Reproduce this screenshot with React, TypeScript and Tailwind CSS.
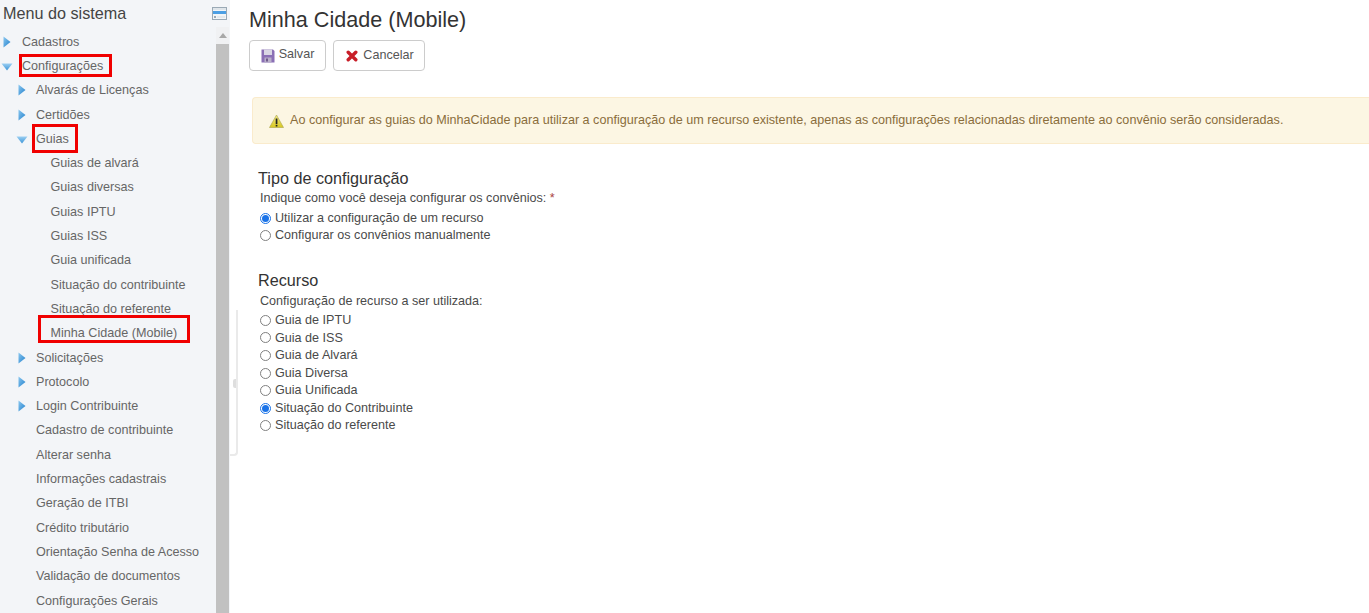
const font = "font-['Liberation_Sans',Arial,sans-serif]";

function Right() {
  return (
    <svg width="8" height="12" viewBox="0 0 8 12" className="block">
      <defs>
        <linearGradient id="gr" x1="0" y1="0" x2="1" y2="1">
          <stop offset="0" stopColor="#8cc8f0" />
          <stop offset="1" stopColor="#1f7fcc" />
        </linearGradient>
      </defs>
      <path d="M0.5 0.5 L7.5 6 L0.5 11.5 Z" fill="url(#gr)" />
    </svg>
  );
}

function Down() {
  return (
    <svg width="12" height="8" viewBox="0 0 12 8" className="block">
      <defs>
        <linearGradient id="gd" x1="0" y1="0" x2="0" y2="1">
          <stop offset="0" stopColor="#9ccff2" />
          <stop offset="1" stopColor="#3a94d8" />
        </linearGradient>
      </defs>
      <path d="M0.5 0.5 L11.5 0.5 L6 7.5 Z" fill="url(#gd)" />
    </svg>
  );
}

type Item = { t: string; lvl: number; icon?: "r" | "d"; box?: string };

const items: Item[] = [
  { t: "Cadastros", lvl: 0, icon: "r" },
  { t: "Configurações", lvl: 0, icon: "d", box: "left-[19px] w-[93px] top-0 h-[23px]" },
  { t: "Alvarás de Licenças", lvl: 1, icon: "r" },
  { t: "Certidões", lvl: 1, icon: "r" },
  { t: "Guias", lvl: 1, icon: "d", box: "left-[32px] w-[46px] top-[-3px] h-[29px]" },
  { t: "Guias de alvará", lvl: 2 },
  { t: "Guias diversas", lvl: 2 },
  { t: "Guias IPTU", lvl: 2 },
  { t: "Guias ISS", lvl: 2 },
  { t: "Guia unificada", lvl: 2 },
  { t: "Situação do contribuinte", lvl: 2 },
  { t: "Situação do referente", lvl: 2 },
  { t: "Minha Cidade (Mobile)", lvl: 2, box: "left-[38px] w-[152px] top-[-6px] h-[28px]" },
  { t: "Solicitações", lvl: 1, icon: "r" },
  { t: "Protocolo", lvl: 1, icon: "r" },
  { t: "Login Contribuinte", lvl: 1, icon: "r" },
  { t: "Cadastro de contribuinte", lvl: 1 },
  { t: "Alterar senha", lvl: 1 },
  { t: "Informações cadastrais", lvl: 1 },
  { t: "Geração de ITBI", lvl: 1 },
  { t: "Crédito tributário", lvl: 1 },
  { t: "Orientação Senha de Acesso", lvl: 1 },
  { t: "Validação de documentos", lvl: 1 },
  { t: "Configurações Gerais", lvl: 1 },
];

const pad = ["pl-[22px]", "pl-[36px]", "pl-[50.5px]"];
const iconPos = ["left-[3px]", "left-[17.5px]", "left-[32px]"];
const iconPosDown = ["left-[1px]", "left-[15.5px]", "left-[30px]"];

function Row({ it }: { it: Item }) {
  return (
    <div className={`relative h-[24.3px] leading-[24.3px] text-[12.6px] text-[#666] whitespace-nowrap ${pad[it.lvl]}`}>
      {it.icon === "r" && (
        <span className={`absolute top-[6px] ${iconPos[it.lvl]}`}>
          <Right />
        </span>
      )}
      {it.icon === "d" && (
        <span className={`absolute top-[9px] ${iconPosDown[it.lvl]}`}>
          <Down />
        </span>
      )}
      {it.t}
      {it.box && <span className={`absolute border-[3px] border-[#f00000] ${it.box}`} />}
    </div>
  );
}

function Radio({ label, on }: { label: string; on?: boolean }) {
  return (
    <div className="flex items-center h-[17.6px] text-[12.6px] text-[#4a4a4a]">
      <span
        className={`w-[11px] h-[11px] rounded-full border bg-white mr-[4px] ml-[2px] flex items-center justify-center ${
          on ? "border-[#1a73e8]" : "border-[#808080]"
        }`}
      >
        {on && <span className="w-[7px] h-[7px] rounded-full bg-[#1a73e8]" />}
      </span>
      {label}
    </div>
  );
}

function Panel() {
  return (
    <svg width="15" height="13" viewBox="0 0 15 13" className="block">
      <rect x="0.5" y="0.5" width="14" height="12" fill="#f2f5f7" stroke="#9aa9b5" />
      <rect x="1" y="1" width="13" height="2" fill="#dfe5ea" />
      <rect x="1" y="4" width="13" height="3" fill="#4c9fe4" />
      <rect x="2" y="9" width="2" height="2" fill="#9aa9b5" />
      <rect x="5" y="9.5" width="8" height="1" fill="#d5dde3" />
    </svg>
  );
}

export default function App() {
  return (
    <div className={`${font} flex h-[613px] w-[1369px] overflow-hidden bg-white`}>
      <aside className="w-[230px] shrink-0 bg-[#f3f5f8] flex flex-col">
        <div className="h-[27px] flex items-center justify-between pl-[3px] pr-[3px] shrink-0">
          <span className="text-[16.2px] text-[#444]">Menu do sistema</span>
          <Panel />
        </div>
        <div className="flex flex-1 min-h-0">
          <nav className="flex-1 min-w-0 overflow-hidden pt-[2.7px]">
            {items.map((it) => (
              <Row key={it.t} it={it} />
            ))}
          </nav>
          <div className="w-[13px] flex flex-col mr-[1px]">
            <div className="h-[17px] flex items-center justify-center bg-[#f0f1f3]">
              <svg width="8" height="5" viewBox="0 0 8 5">
                <path d="M0 5 L4 0 L8 5 Z" fill="#a8a8a8" />
              </svg>
            </div>
            <div className="flex-1 bg-[#c1c1c1]" />
          </div>
        </div>
      </aside>
      <div className="relative w-[8px] shrink-0">
        <div className="absolute left-0 top-[310px] h-[146px] w-[8px] rounded-br-[4px] border-r-2 border-b-2 border-[#eaeaea] bg-white" />
        <div className="absolute left-[3px] top-[379px] h-[9px] w-[3px] rounded-l-[2px] bg-[#dedede]" />
      </div>
      <main className="flex-1 min-w-0 pl-[11px]">
        <h1 className="text-[21.6px] leading-[24px] text-[#333] mt-[8px]">Minha Cidade (Mobile)</h1>
        <div className="flex gap-[7px] mt-[8px]">
          <button className="h-[31px] w-[77px] flex items-center justify-center gap-[4px] border border-[#ccc] rounded-[4px] bg-white text-[12.6px] text-[#555]">
            <svg width="14" height="14" viewBox="0 0 14 14" className="block">
              <path d="M0.5 0.5 H12 L13.5 2 V13.5 H0.5 Z" fill="#8a6fb5" />
              <rect x="3" y="0.5" width="8" height="5.5" fill="#d9d6e4" />
              <rect x="3.5" y="8.5" width="7" height="5" fill="#b9b0c9" />
              <rect x="5" y="9.5" width="2" height="3" fill="#6f5a8c" />
            </svg>
            <span className="pb-[2px]">Salvar</span>
          </button>
          <button className="h-[31px] w-[92px] flex items-center justify-center gap-[5px] border border-[#ccc] rounded-[4px] bg-white pl-[2px] text-[12.6px] text-[#555]">
            <svg width="12" height="12" viewBox="0 0 12 12" className="block">
              <path d="M2.2 2.2 L9.8 9.8 M9.8 2.2 L2.2 9.8" stroke="#c81e28" strokeWidth="3.4" strokeLinecap="round" />
            </svg>
            <span className="pb-[1px]">Cancelar</span>
          </button>
        </div>
        <div className="mt-[26px] ml-[3px] h-[47px] flex items-center border border-r-0 border-[#faebcc] rounded-l-[4px] bg-[#fcf6e3] pl-[16px] text-[12.6px] text-[#8a6d3b] whitespace-nowrap">
          <svg width="15" height="14" viewBox="0 0 15 14" className="block mr-[6px] shrink-0">
            <defs>
              <linearGradient id="w" x1="0" y1="0" x2="0" y2="1">
                <stop offset="0" stopColor="#f2ea8a" />
                <stop offset="1" stopColor="#d8c820" />
              </linearGradient>
            </defs>
            <path d="M7.5 1 L14.5 13.5 H0.5 Z" fill="url(#w)" stroke="#a8a24a" strokeWidth="0.6" />
            <rect x="6.7" y="4.5" width="1.7" height="5.5" fill="#222" />
            <rect x="6.7" y="10.8" width="1.7" height="1.7" fill="#222" />
          </svg>
          <span>
            Ao configurar as guias do MinhaCidade para utilizar a configuração de um recurso existente, apenas as configurações relacionadas diretamente ao convênio serão consideradas.
          </span>
        </div>
        <section className="ml-[9px] mt-[25px]">
          <h2 className="text-[16.2px] leading-[18px] text-[#333]">Tipo de configuração</h2>
          <div className="ml-[2px] mt-[4px] text-[12.6px] leading-[15px] text-[#4a4a4a]">
            Indique como você deseja configurar os convênios: <span className="text-[#a94442]">*</span>
          </div>
          <div className="mt-[3.4px]">
            <Radio label="Utilizar a configuração de um recurso" on />
            <Radio label="Configurar os convênios manualmente" />
          </div>
          <h2 className="text-[16.2px] leading-[18px] text-[#333] mt-[26.6px]">Recurso</h2>
          <div className="ml-[2px] mt-[5px] text-[12.6px] leading-[15px] text-[#4a4a4a]">Configuração de recurso a ser utilizada:</div>
          <div className="mt-[2.4px]">
            <Radio label="Guia de IPTU" />
            <Radio label="Guia de ISS" />
            <Radio label="Guia de Alvará" />
            <Radio label="Guia Diversa" />
            <Radio label="Guia Unificada" />
            <Radio label="Situação do Contribuinte" on />
            <Radio label="Situação do referente" />
          </div>
        </section>
      </main>
    </div>
  );
}
